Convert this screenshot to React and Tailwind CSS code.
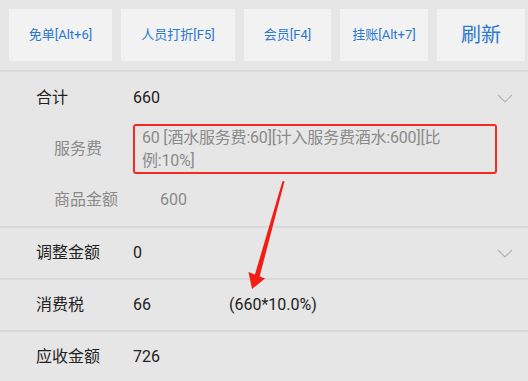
const font = { fontFamily: "Roboto, 'Noto Sans CJK SC', sans-serif" };

const buttons = [
  { label: "免单[Alt+6]", w: "w-[103px]" },
  { label: "人员打折[F5]", w: "w-[114px]" },
  { label: "会员[F4]", w: "w-[87px]" },
  { label: "挂账[Alt+7]", w: "w-[88px]" },
];

function Chevron() {
  return (
    <svg width="16" height="9" viewBox="0 0 16 9" className="ml-auto mr-[15px]">
      <polyline points="1,1 8,8 15,1" fill="none" stroke="#b3b3b3" strokeWidth="1.2" />
    </svg>
  );
}

function Row({ label, value, extra, chevron }) {
  return (
    <div className="flex h-[50px] items-center pl-[36px] text-[16px] text-[#222]">
      <span className="w-[97px]">{label}</span>
      <span className="w-[96px]">{value}</span>
      {extra && <span>{extra}</span>}
      {chevron && <Chevron />}
    </div>
  );
}

export default function App() {
  return (
    <div className="relative h-[381px] w-[528px] overflow-hidden bg-[#e6e6e6]" style={font}>
      {/* toolbar */}
      <div className="flex h-[70px] gap-[9px] pl-[9px] pt-[9px]">
        {buttons.map((b) => (
          <button
            key={b.label}
            className={`h-[52px] ${b.w} bg-[#f2f2f2] text-[13px] text-[#2b78cf]`}
          >
            {b.label}
          </button>
        ))}
        <button className="h-[52px] w-[88px] bg-[#f2f2f2] text-[20px] text-[#2b78cf]">刷新</button>
      </div>
      <div className="h-[2px] bg-[#d9d9d9]" />

      {/* 合计 section */}
      <div>
        <div className="flex h-[52px] items-center pl-[36px] text-[16px] text-[#222]">
          <span className="w-[97px]">合计</span>
          <span>660</span>
          <Chevron />
        </div>
        <div className="flex items-center pl-[54px] text-[16px] text-[#8a8a8a]">
          <span className="w-[79px]">服务费</span>
          <div className="h-[50px] w-[364px] rounded-[3px] border-2 border-[#f52a22] px-[7px] leading-[23px] tracking-[-0.2px]">
            60 [酒水服务费:60][计入服务费酒水:600][比
            <br />
            例:10%]
          </div>
        </div>
        <div className="flex h-[52px] items-center pl-[54px] text-[16px] text-[#8a8a8a]">
          <span className="w-[106px]">商品金额</span>
          <span>600</span>
        </div>
      </div>
      <div className="h-[2px] bg-[#d9d9d9]" />
      <Row label="调整金额" value="0" chevron />
      <div className="h-[2px] bg-[#d9d9d9]" />
      <Row label="消费税" value="66" extra="(660*10.0%)" />
      <div className="h-[2px] bg-[#d9d9d9]" />
      <Row label="应收金额" value="726" />

      {/* annotation arrow */}
      <svg className="pointer-events-none absolute left-0 top-0" width="528" height="381">
        <polygon points="282.5,181 284.5,181.5 259.5,277 254.5,276" fill="#f21d14" />
        <polygon points="248.5,272 265,278.5 252,289" fill="#f21d14" />
      </svg>
    </div>
  );
}
